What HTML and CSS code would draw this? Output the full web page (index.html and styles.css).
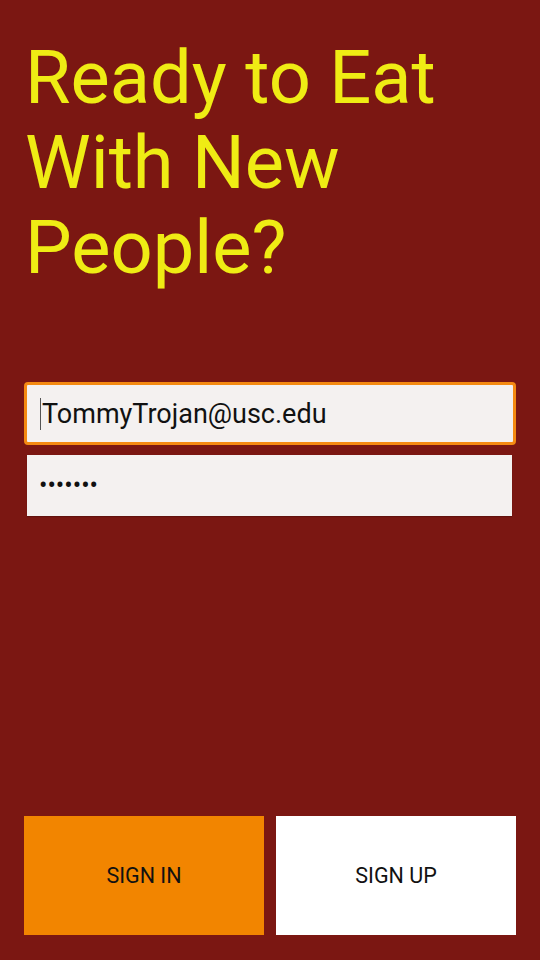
FILE: index.html
```html
<!DOCTYPE html>
<html lang="en">

<head>
  <meta charset="UTF-8">
  <meta name="viewport" content="width=device-width, initial-scale=1.0">
  <title>Sign In</title>
  <link rel="stylesheet" href="styles.css">
</head>

<body>
  <div class="screen">
    <h1 class="headline">Ready to Eat<br>With New<br>People?</h1>

    <div class="fields">
      <div class="field field-focus">
        <span class="caret"></span><span>TommyTrojan@usc.edu</span>
      </div>
      <div class="field field-pass">
        <span class="dots">&bull;&bull;&bull;&bull;&bull;&bull;&bull;</span>
      </div>
    </div>

    <div class="buttons">
      <a class="btn btn-in" href="#">SIGN IN</a>
      <a class="btn btn-up" href="#">SIGN UP</a>
    </div>
  </div>
</body>

</html>
```

FILE: styles.css
```css
html,
body {
  margin: 0;
  height: 100%;
  background-color: #7b1712;
}

.screen {
  display: flex;
  flex-direction: column;
  height: 960px;
  box-sizing: border-box;
  padding: 0 24px 25px;
  font-family: Roboto, "Liberation Sans", sans-serif;
}

.headline {
  margin: 35px 0 0 1px;
  color: #efec14;
  font-size: 74px;
  font-weight: 400;
  line-height: 85px;
}

.fields {
  display: flex;
  flex-direction: column;
  gap: 10px;
  margin-top: 92px;
}

.field {
  display: flex;
  align-items: center;
  box-sizing: border-box;
  background: #f4f1f0;
  color: #111;
}

/* focused email box, orange ring */
.field-focus {
  height: 63px;
  padding-left: 13px;
  border: 3px solid #f48a12;
  border-radius: 4px;
  font-size: 27px;
}

.caret {
  width: 1px;
  height: 32px;
  margin-right: 1px;
  background: #555;
}

.field-pass {
  height: 61px;
  margin: 0 4px 0 3px;
  padding-left: 12px;
  box-shadow: 0 1px 1px rgba(0, 0, 0, 0.2);
}

.dots {
  font-size: 25px;
}

.buttons {
  display: flex;
  gap: 12px;
  margin-top: auto;
}

.btn {
  flex: 1;
  display: flex;
  justify-content: center;
  align-items: center;
  height: 119px;
  color: #111;
  font-size: 21.5px;
  text-decoration: none;
}

.btn-in {
  background: #f28500;
}

.btn-up {
  background: #ffffff;
}
```
